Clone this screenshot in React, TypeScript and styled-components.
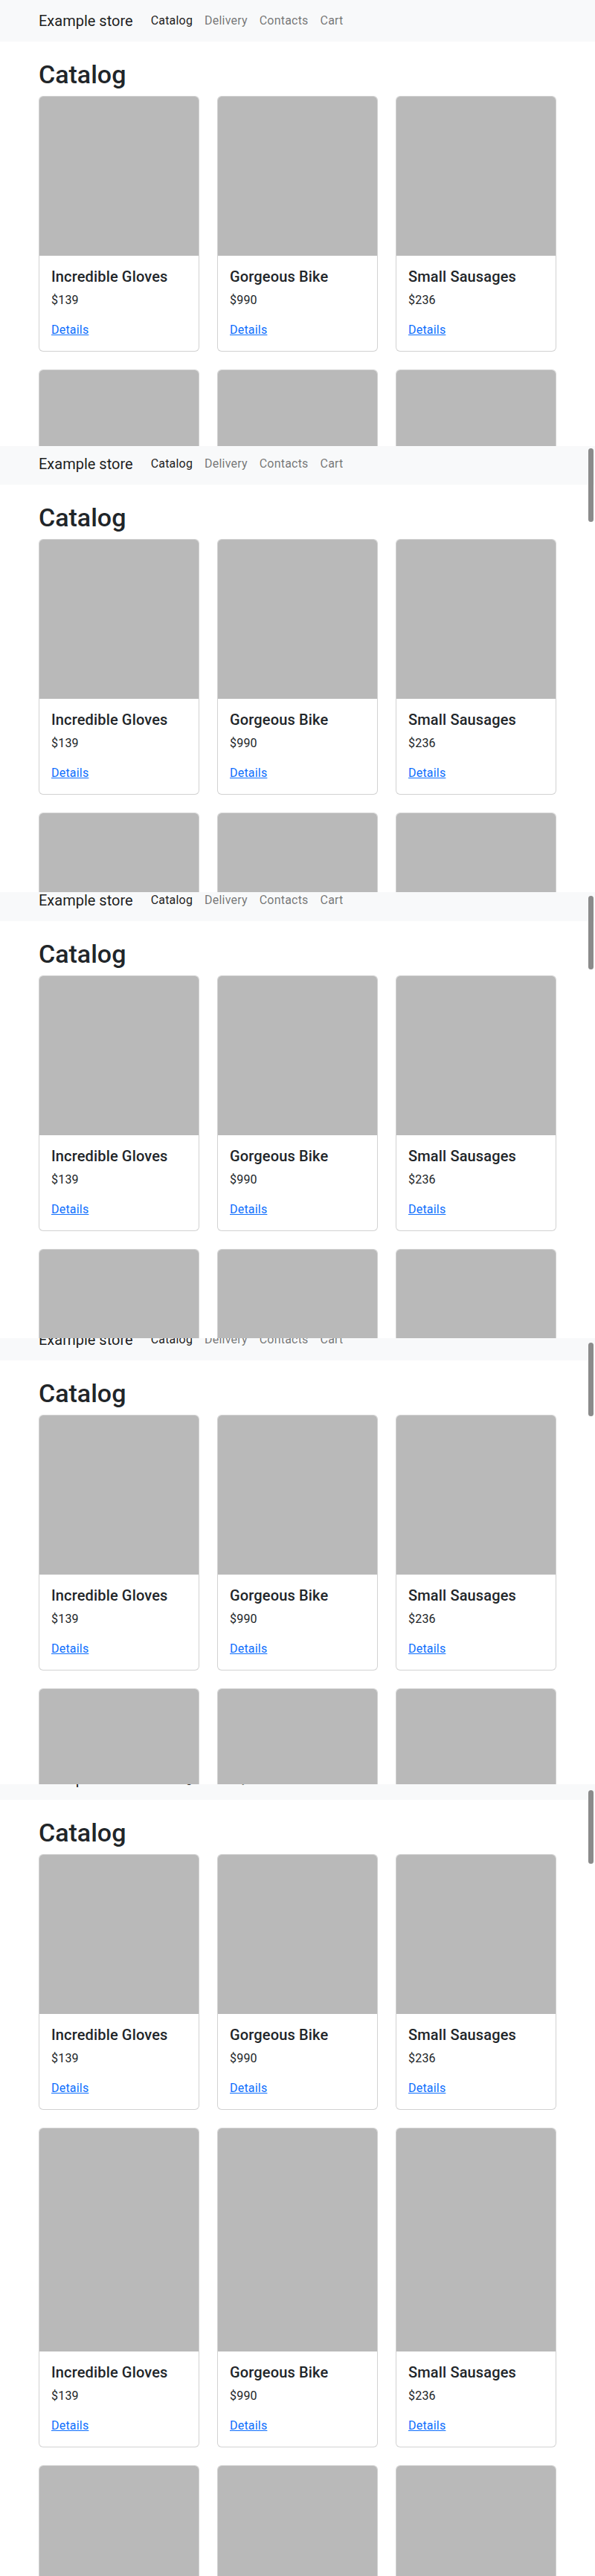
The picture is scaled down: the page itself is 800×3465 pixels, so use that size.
import React from "react";
import styled, { createGlobalStyle } from "styled-components";

const GlobalStyle = createGlobalStyle`
  html, body {
    margin: 0;
    padding: 0;
    background: #ffffff;
  }
  body {
    font-family: Roboto, "Liberation Sans", Arial, sans-serif;
    font-size: 16px;
    line-height: 1.5;
    color: #212529;
    -webkit-font-smoothing: antialiased;
  }
  * { box-sizing: border-box; }
`;

const Shot = styled.div`
  display: flex;
  flex-direction: column;
  width: 800px;
`;

const Frame = styled.section<{ $height: number }>`
  position: relative;
  height: ${(p) => p.$height}px;
  overflow: hidden;
  background: #ffffff;
`;

const Scrolled = styled.div<{ $shift: number }>`
  margin-top: -${(p) => p.$shift}px;
`;

const ScrollThumb = styled.div<{ $top: number }>`
  position: absolute;
  right: 2px;
  top: ${(p) => p.$top}px;
  width: 7px;
  height: 99px;
  border-radius: 4px;
  background: #8b8b8b;
`;

const Navbar = styled.nav`
  background: #f8f9fa;
  padding: 8px 0;
`;

const NavInner = styled.div`
  width: 720px;
  margin: 0 auto;
  padding: 0 12px;
  display: flex;
  align-items: center;
`;

const Brand = styled.a`
  font-size: 20px;
  line-height: 30px;
  padding: 5px 0;
  margin-right: 16px;
  color: rgba(0, 0, 0, 0.9);
  text-decoration: none;
  white-space: nowrap;
`;

const NavList = styled.div`
  display: flex;
  align-items: center;
`;

const NavLink = styled.a<{ $active?: boolean }>`
  padding: 8px;
  font-size: 16px;
  line-height: 24px;
  letter-spacing: 0.2px;
  color: ${(p) => (p.$active ? "rgba(0, 0, 0, 0.9)" : "rgba(0, 0, 0, 0.55)")};
  text-decoration: none;
`;

const Main = styled.main`
  width: 720px;
  margin: 0 auto;
  padding: 24px 12px;
`;

const PageTitle = styled.h1`
  margin: 0 0 8px;
  font-size: 34px;
  font-weight: 500;
  line-height: 1.2;
  color: #212529;
`;

const CardGrid = styled.div`
  display: grid;
  grid-template-columns: repeat(3, 216px);
  column-gap: 24px;
  row-gap: 24px;
  align-items: start;
`;

const Card = styled.div`
  display: flex;
  flex-direction: column;
  background: #ffffff;
  border: 1px solid rgba(0, 0, 0, 0.175);
  border-radius: 6px;
  overflow: hidden;
`;

const Thumb = styled.div<{ $h: number }>`
  height: ${(p) => p.$h}px;
  background: #b9b9b9;
`;

const CardBody = styled.div`
  padding: 16px;
`;

const CardTitle = styled.h5`
  margin: 0 0 8px;
  font-size: 20px;
  font-weight: 500;
  line-height: 1.2;
  letter-spacing: 0.15px;
  color: #212529;
`;

const Price = styled.p`
  margin: 0 0 16px;
  font-size: 16px;
  line-height: 24px;
  letter-spacing: 0.2px;
  color: #212529;
`;

const DetailsLink = styled.a`
  font-size: 16px;
  line-height: 24px;
  letter-spacing: 0.2px;
  color: #0d6efd;
  text-decoration: underline;
`;

const products = [
  { name: "Incredible Gloves", price: 139 },
  { name: "Gorgeous Bike", price: 990 },
  { name: "Small Sausages", price: 236 },
];

const rowImageHeights = [214, 300, 214];

const Page: React.FC = () => (
  <>
    <Navbar>
      <NavInner>
        <Brand>Example store</Brand>
        <NavList>
          <NavLink $active>Catalog</NavLink>
          <NavLink>Delivery</NavLink>
          <NavLink>Contacts</NavLink>
          <NavLink>Cart</NavLink>
        </NavList>
      </NavInner>
    </Navbar>
    <Main>
      <PageTitle>Catalog</PageTitle>
      <CardGrid>
        {rowImageHeights.map((h, r) =>
          products.map((p, i) => (
            <Card key={`${r}-${i}`}>
              <Thumb $h={h} />
              <CardBody>
                <CardTitle>{p.name}</CardTitle>
                <Price>${p.price}</Price>
                <DetailsLink href="#">Details</DetailsLink>
              </CardBody>
            </Card>
          ))
        )}
      </CardGrid>
    </Main>
  </>
);

const frames = [
  { height: 600, shift: 0, thumb: null as number | null },
  { height: 600, shift: 4, thumb: 3 },
  { height: 600, shift: 17, thumb: 5 },
  { height: 600, shift: 26, thumb: 6 },
  { height: 1065, shift: 35, thumb: 8 },
];

export default function App() {
  return (
    <>
      <GlobalStyle />
      <Shot>
        {frames.map((f, i) => (
          <Frame key={i} $height={f.height}>
            <Scrolled $shift={f.shift}>
              <Page />
            </Scrolled>
            {f.thumb !== null && <ScrollThumb $top={f.thumb} />}
          </Frame>
        ))}
      </Shot>
    </>
  );
}
